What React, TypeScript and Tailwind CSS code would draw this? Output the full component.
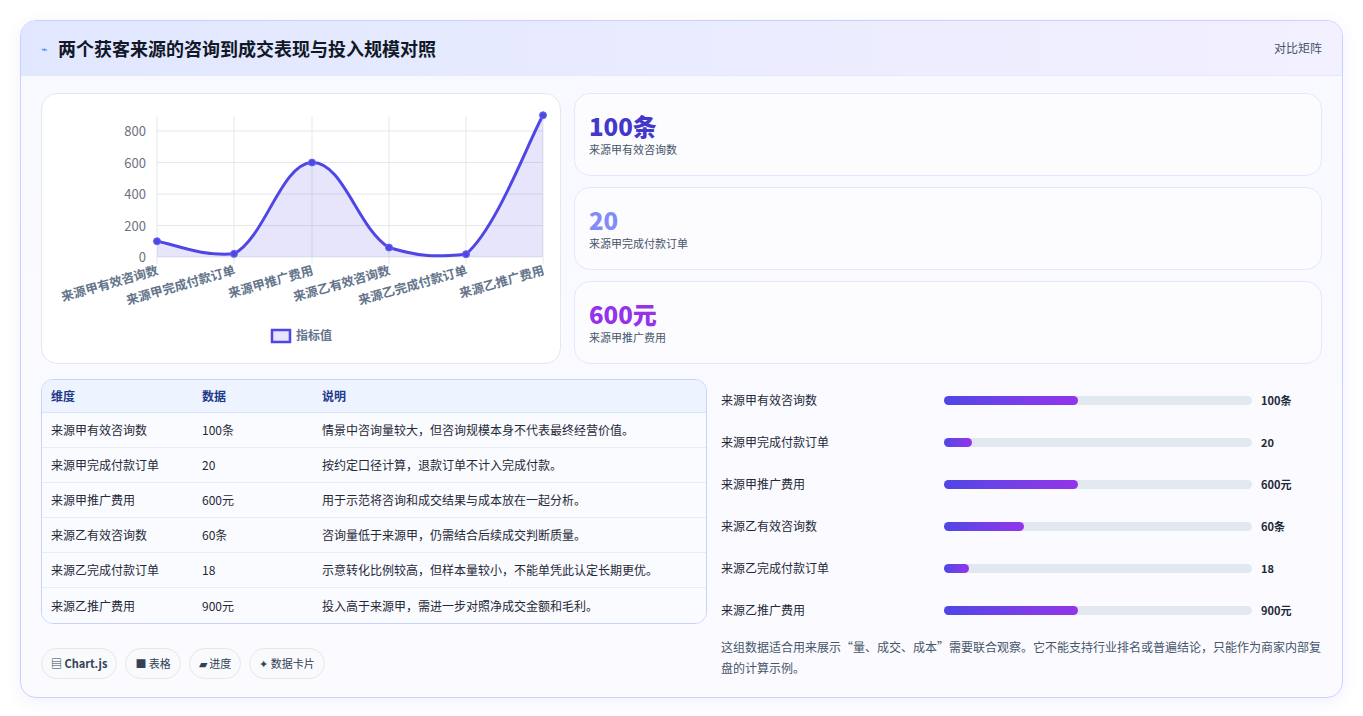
const F = { fontFamily: '"Noto Sans CJK SC", "Noto Sans", sans-serif' };

const labels = ["来源甲有效咨询数", "来源甲完成付款订单", "来源甲推广费用", "来源乙有效咨询数", "来源乙完成付款订单", "来源乙推广费用"];
const values = [100, 20, 600, 60, 18, 900];

const rows = [
  ["来源甲有效咨询数", "100条", "情景中咨询量较大，但咨询规模本身不代表最终经营价值。"],
  ["来源甲完成付款订单", "20", "按约定口径计算，退款订单不计入完成付款。"],
  ["来源甲推广费用", "600元", "用于示范将咨询和成交结果与成本放在一起分析。"],
  ["来源乙有效咨询数", "60条", "咨询量低于来源甲，仍需结合后续成交判断质量。"],
  ["来源乙完成付款订单", "18", "示意转化比例较高，但样本量较小，不能单凭此认定长期更优。"],
  ["来源乙推广费用", "900元", "投入高于来源甲，需进一步对照净成交金额和毛利。"],
];

const bars = [
  ["来源甲有效咨询数", 43.5, "100条"],
  ["来源甲完成付款订单", 9, "20"],
  ["来源甲推广费用", 43.5, "600元"],
  ["来源乙有效咨询数", 26, "60条"],
  ["来源乙完成付款订单", 8, "18"],
  ["来源乙推广费用", 43.5, "900元"],
] as const;

function Chart() {
  const xs = [115, 192, 270, 347, 424, 501];
  const y = (v: number) => 163 - v * 0.1575;
  const pts = values.map((v, i) => [xs[i], y(v)]);
  let d = `M${pts[0][0]},${pts[0][1]}`;
  for (let i = 0; i < pts.length - 1; i++) {
    const p0 = pts[Math.max(0, i - 1)], p1 = pts[i], p2 = pts[i + 1], p3 = pts[Math.min(pts.length - 1, i + 2)];
    const t = 0.4 / 2;
    const c1 = [p1[0] + (p2[0] - p0[0]) * t, p1[1] + (p2[1] - p0[1]) * t];
    const c2 = [p2[0] - (p3[0] - p1[0]) * t, p2[1] - (p3[1] - p1[1]) * t];
    d += ` C${c1[0]},${Math.min(c1[1], 163)} ${c2[0]},${Math.min(c2[1], 163)} ${p2[0]},${p2[1]}`;
  }
  return (
    <svg width="520" height="270" viewBox="0 0 520 270" style={F}>
      {[0, 200, 400, 600, 800].map((v) => (
        <g key={v}>
          <line x1="115" x2="501" y1={y(v)} y2={y(v)} stroke="#e5e7eb" />
          <text x="104" y={y(v) + 5} textAnchor="end" fontSize="13" fill="#6b7280">{v}</text>
        </g>
      ))}
      {xs.map((x) => <line key={x} x1={x} x2={x} y1="22" y2="170" stroke="#e5e7eb" />)}
      <path d={`${d} L501,163 L115,163 Z`} fill="rgba(79,70,229,0.14)" />
      <path d={d} fill="none" stroke="#4f46e5" strokeWidth="3" />
      {pts.map(([px, py], i) => <circle key={i} cx={px} cy={py} r="3.5" fill="#4f46e5" stroke="#6366f1" strokeWidth="1" />)}
      {labels.map((l, i) => (
        <text key={l} transform={`translate(${xs[i] + 2},${180}) rotate(-16)`} textAnchor="end" fontSize="12.5" fontWeight="600" fill="#64748b">{l}</text>
      ))}
      <rect x="230" y="236" width="18" height="12" fill="rgba(79,70,229,0.14)" stroke="#4f46e5" strokeWidth="2.5" />
      <text x="254" y="246" fontSize="12" fontWeight="600" fill="#64748b">指标值</text>
    </svg>
  );
}

export default function App() {
  return (
    <div className="min-h-[716px] bg-white p-5 pb-0" style={F}>
      <div className="overflow-hidden rounded-2xl border border-[#c7d2fe] bg-gradient-to-b from-[#f8f9ff] to-[#fbfbff] shadow-[0_4px_16px_rgba(79,70,229,0.08)]">
        <div className="flex h-[55px] items-center justify-between bg-gradient-to-r from-[#e0e7ff] to-[#f3f0ff] px-5 border-b border-[#e5e7ff]">
          <div className="flex items-center gap-2.5">
            <span className="text-[11px] text-[#3b82f6]">⌁</span>
            <h1 className="text-[18px] font-bold text-[#111827]">两个获客来源的咨询到成交表现与投入规模对照</h1>
          </div>
          <span className="text-[12px] text-[#475569]">对比矩阵</span>
        </div>
        <div className="px-5 pt-[17px] pb-[18px]">
          <div className="flex gap-[13px]">
            <div className="h-[271px] w-[520px] shrink-0 rounded-2xl border border-[#e5e7eb] bg-white">
              <Chart />
            </div>
            <div className="flex flex-1 flex-col gap-[11px]">
              {[
                ["100条", "来源甲有效咨询数", "text-[#4338ca]"],
                ["20", "来源甲完成付款订单", "text-[#818cf8]"],
                ["600元", "来源甲推广费用", "text-[#9333ea]"],
              ].map(([v, l, c]) => (
                <div key={l} className="flex h-[83px] flex-col justify-center rounded-2xl border border-[#e5e7ff] bg-[#fcfcff] px-[14px]">
                  <div className={`text-[24px] font-extrabold leading-[30px] ${c}`}>{v}</div>
                  <div className="text-[11px] text-[#475569]">{l}</div>
                </div>
              ))}
            </div>
          </div>
          <div className="mt-[15px] flex gap-[14px]">
            <div className="w-[666px] shrink-0">
              <div className="overflow-hidden rounded-xl border border-[#c7d2fe] text-[12px] text-[#1f2937]">
                <div className="flex h-[33px] items-center bg-[#eef4ff] font-semibold text-[#1e3a8a] border-b border-[#dbe4ff]">
                  <div className="w-[160px] pl-[9px]">维度</div>
                  <div className="w-[120px]">数据</div>
                  <div>说明</div>
                </div>
                {rows.map((r, i) => (
                  <div key={i} className={`flex h-[35px] items-center bg-[#fafbff] ${i < 5 ? "border-b border-[#e8ecf4]" : ""}`}>
                    <div className="w-[160px] pl-[9px]">{r[0]}</div>
                    <div className="w-[120px]">{r[1]}</div>
                    <div>{r[2]}</div>
                  </div>
                ))}
              </div>
              <div className="mt-6 flex gap-[8px] text-[11px] text-[#334155]">
                {["▤ Chart.js", "■ 表格", "▰ 进度", "✦ 数据卡片"].map((t, i) => (
                  <span key={t} className={`rounded-full border border-[#e5e7eb] bg-[#f8fafc] px-[9px] py-[6px] ${i === 0 ? "font-bold" : ""}`}>{t}</span>
                ))}
              </div>
            </div>
            <div className="flex-1">
              {bars.map(([l, w, v]) => (
                <div key={l} className="flex h-[42px] items-center text-[12px] text-[#1f2937]">
                  <div className="w-[223px]">{l}</div>
                  <div className="h-[9px] w-[308px] rounded-full bg-[#e2e8f0]">
                    <div className="h-full rounded-full bg-gradient-to-r from-[#4f46e5] to-[#9333ea]" style={{ width: `${w}%` }} />
                  </div>
                  <div className="ml-[9px] text-[11px] font-bold">{v}</div>
                </div>
              ))}
              <p className="mt-[5px] text-[12px] leading-[21px] text-[#475569]">这组数据适合用来展示“量、成交、成本”需要联合观察。它不能支持行业排名或普遍结论，只能作为商家内部复盘的计算示例。</p>
            </div>
          </div>
        </div>
      </div>
    </div>
  );
}
